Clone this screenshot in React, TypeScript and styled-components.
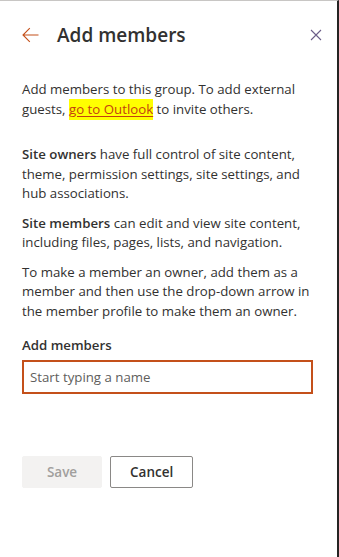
import { createGlobalStyle } from 'styled-components';
import styled from 'styled-components';

const GlobalStyle = createGlobalStyle`
  html, body {
    margin: 0;
    padding: 0;
    background: #ffffff;
  }
  body {
    font-family: "Open Sans", "Noto Sans", sans-serif;
    color: #323130;
  }
`;

const Panel = styled.div`
  width: 337px;
  height: 556px;
  border-top: 1px solid #c8c6c4;
  border-right: 2px solid #252423;
  background: #ffffff;
  display: flex;
  flex-direction: column;
`;

const Header = styled.div`
  display: flex;
  align-items: center;
  height: 28px;
  padding: 20px 15px 0 22px;
`;

const IconButton = styled.button`
  border: 0;
  background: transparent;
  padding: 0;
  display: flex;
  align-items: center;
  justify-content: center;
  cursor: pointer;
`;

const Title = styled.h1`
  flex: 1;
  margin: 0 0 0 18px;
  font-size: 19px;
  line-height: 28px;
  font-weight: 600;
  color: #323130;
`;

const Body = styled.div`
  padding: 31px 24px 0 22px;
  display: flex;
  flex-direction: column;
`;

const Para = styled.p<{ $gap?: number }>`
  margin: 0 0 ${(p) => p.$gap ?? 10}px;
  font-size: 13.25px;
  line-height: 19.5px;
  color: #323130;
  white-space: nowrap;
`;

const Strong = styled.b`
  font-weight: 600;
`;

const Highlight = styled.a`
  background: #ffff00;
  color: #c4410e;
  text-decoration: underline;
  text-underline-offset: 2px;
  padding: 1px 0 2px;
`;

const Label = styled.label`
  margin-top: 14px;
  font-size: 13.25px;
  line-height: 20px;
  font-weight: 600;
  color: #323130;
`;

const Input = styled.input`
  margin-top: 5px;
  box-sizing: border-box;
  width: 291px;
  height: 34px;
  border: 2px solid #c4501a;
  padding: 0 6px;
  font-family: inherit;
  font-size: 13.25px;
  color: #323130;
  outline: none;
  &::placeholder {
    color: #605e5c;
  }
`;

const Actions = styled.div`
  display: flex;
  gap: 8px;
  margin-top: 62px;
`;

const Button = styled.button<{ $primary?: boolean }>`
  box-sizing: border-box;
  height: 32px;
  min-width: 80px;
  padding: 0 19px;
  font-family: inherit;
  font-size: 13.5px;
  font-weight: 600;
  border-radius: 2px;
  border: ${(p) => (p.$primary ? '1px solid #f3f2f1' : '1px solid #8a8886')};
  background: ${(p) => (p.$primary ? '#f3f2f1' : '#ffffff')};
  color: ${(p) => (p.$primary ? '#a19f9d' : '#323130')};
`;

const BackIcon = () => (
  <svg width="17" height="16" viewBox="0 0 17 16" fill="none">
    <path d="M16.5 8H1.2M7.8 1.2L1 8L7.8 14.8" stroke="#c4501a" strokeWidth="1.1" />
  </svg>
);

const CloseIcon = () => (
  <svg width="12" height="12" viewBox="0 0 12 12" fill="none">
    <path d="M1 1L11 11M11 1L1 11" stroke="#6b5e88" strokeWidth="1.1" />
  </svg>
);

export default function App() {
  return (
    <>
      <GlobalStyle />
      <Panel>
        <Header>
          <IconButton aria-label="Back">
            <BackIcon />
          </IconButton>
          <Title>Add members</Title>
          <IconButton aria-label="Close">
            <CloseIcon />
          </IconButton>
        </Header>
        <Body>
          <Para $gap={26}>
            Add members to this group. To add external
            <br />
            guests, <Highlight>go to Outlook</Highlight> to invite others.
          </Para>
          <Para>
            <Strong>Site owners</Strong> have full control of site content,
            <br />
            theme, permission settings, site settings, and
            <br />
            hub associations.
          </Para>
          <Para>
            <Strong>Site members</Strong> can edit and view site content,
            <br />
            including files, pages, lists, and navigation.
          </Para>
          <Para $gap={0}>
            To make a member an owner, add them as a
            <br />
            member and then use the drop-down arrow in
            <br />
            the member profile to make them an owner.
          </Para>
          <Label htmlFor="members">Add members</Label>
          <Input id="members" placeholder="Start typing a name" />
          <Actions>
            <Button $primary disabled>
              Save
            </Button>
            <Button>Cancel</Button>
          </Actions>
        </Body>
      </Panel>
    </>
  );
}
